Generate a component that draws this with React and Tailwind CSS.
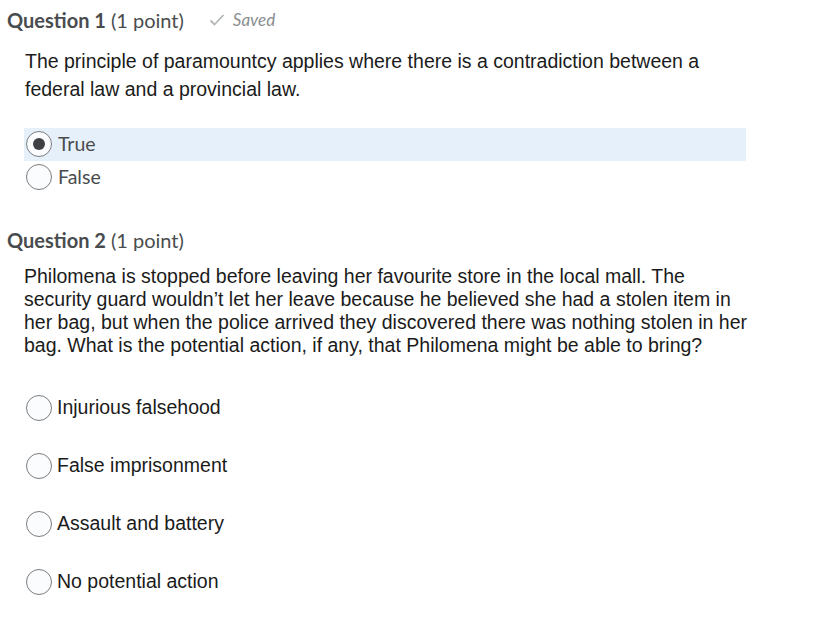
import React from "react";

const lato = { fontFamily: "Lato, 'Open Sans', sans-serif" };
const arial = { fontFamily: "'Liberation Sans', Arial, sans-serif" };

function Radio({ checked }) {
  return (
    <span className="flex h-[26px] w-[26px] shrink-0 items-center justify-center rounded-full border border-[#7a7d80] bg-[#fbfcfe]">
      {checked && <span className="h-[12px] w-[12px] rounded-full bg-[#3e4144]" />}
    </span>
  );
}

function Heading({ num, saved }) {
  return (
    <div className="flex h-[40px] items-center pl-[7px] text-[20px] text-[#494c4e]" style={lato}>
      <span className="font-bold">Question {num}</span>
      <span className="ml-[5px]">(1 point)</span>
      {saved && (
        <span className="ml-[25px] flex items-center text-[17px] italic text-[#8a8d90]">
          <svg width="16" height="14" viewBox="0 0 16 14" className="mr-[8px]">
            <path d="M1.5 7.5 L5.5 11.5 L14.5 2" fill="none" stroke="#b5b8ba" strokeWidth="1.8" />
          </svg>
          Saved
        </span>
      )}
    </div>
  );
}

export default function App() {
  const q2Options = ["Injurious falsehood", "False imprisonment", "Assault and battery", "No potential action"];

  return (
    <div className="min-h-screen w-[832px] bg-white">
      <Heading num={1} saved />
      <p className="ml-[25px] mt-[7px] w-[700px] text-[19.5px] leading-[28px] text-[#1b1b1b]" style={arial}>
        The principle of paramountcy applies where there is a contradiction between a federal law and a provincial law.
      </p>
      <div className="mt-[25px] ml-[24px] w-[722px]">
        <div className="flex h-[33px] items-center gap-[6px] bg-[#e6f0fa] pb-[2px] pl-[2px] text-[19.5px] text-[#494c4e]" style={lato}>
          <Radio checked />
          <span>True</span>
        </div>
        <div className="flex h-[33px] items-center gap-[6px] pb-[2px] pl-[2px] text-[19.5px] text-[#494c4e]" style={lato}>
          <Radio />
          <span>False</span>
        </div>
      </div>
      <div className="mt-[26px]">
        <Heading num={2} />
      </div>
      <p className="ml-[24px] mt-[5px] w-[730px] text-[19.5px] leading-[23px] text-[#1b1b1b]" style={arial}>
        Philomena is stopped before leaving her favourite store in the local mall. The security guard wouldn’t let her leave because he believed she had a stolen item in her bag, but when the police arrived they discovered there was nothing stolen in her bag. What is the potential action, if any, that Philomena might be able to bring?
      </p>
      <div className="ml-[26px] mt-[38px] flex flex-col gap-[32px]">
        {q2Options.map((o) => (
          <div key={o} className="flex h-[26px] items-center gap-[5px] text-[19.5px] text-[#1b1b1b]" style={arial}>
            <Radio />
            <span>{o}</span>
          </div>
        ))}
      </div>
    </div>
  );
}
